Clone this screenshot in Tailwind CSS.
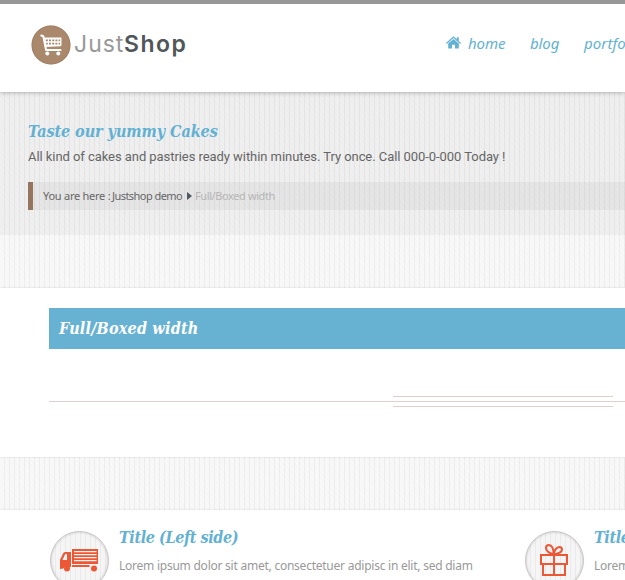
<!DOCTYPE html>
<html lang="en">
<head>
<meta charset="utf-8">
<title>JustShop</title>
<script src="https://cdn.jsdelivr.net/npm/@tailwindcss/browser@4"></script>
</head>
<body class="w-[625px] h-[580px] overflow-hidden bg-[#f7f7f7] bg-[repeating-linear-gradient(90deg,transparent_0_4px,#0000000b_4px_5px),repeating-linear-gradient(45deg,#ffffff50_0_1px,transparent_1px_4px)] font-['Noto_Sans',sans-serif] whitespace-nowrap">
<header class="relative h-[92px] border-t-4 border-[#979797] bg-white shadow-[0_1px_4px_#00000040] flex">
  <div class="flex pl-[31px] pt-[21px]">
    <svg class="w-10 h-10 shrink-0" viewBox="0 0 40 40">
      <circle cx="20" cy="20" r="19.5" fill="#a9886c"/>
      <circle cx="20" cy="20" r="19" fill="none" stroke="#96765c" stroke-opacity=".5"/>
      <path d="M10.300 10.500l2 .8 2.800 13.700h14.400" fill="none" stroke="#fff" stroke-width="2" stroke-linecap="round" stroke-linejoin="round"/>
      <path fill="#fff" d="M12.500 12.500h18v7.500q0 1-.8 1.200L14 22z"/>
      <path fill="#a9886c" d="M14.800 14.500h2v1.800h-2zm3.200 0h2v1.800h-2zm3.200 0h2v1.800h-2zm3.200 0h2v1.800h-2zm3.200 0h1.500v1.800h-1.500zM15.200 17.800h1.600v1.700h-1.600zm2.800 0h2v1.700h-2zm3.200 0h2v1.700h-2zm3.200 0h2v1.700h-2zm3.200 0h1.500v1.700h-1.500z"/>
      <circle cx="16.300" cy="28.500" r="2" fill="#fff"/><circle cx="27.300" cy="28.500" r="2" fill="#fff"/>
    </svg>
    <div class="ml-[3px] mt-[5px] leading-[29px] text-[23px] text-[#999] font-['Inter',sans-serif] flex"><span class="w-[50px] tracking-[1px]">Just</span><span class="font-semibold text-[#50575a] tracking-[1.5px]">Shop</span></div>
  </div>
  <nav class="ml-auto w-[179px] flex pt-[28px] text-[15px] leading-[22px] italic text-[#62b1d3]">
    <svg class="w-[15px] h-[13px] mt-[4px] mr-[7px] shrink-0" viewBox="0 0 15 13" fill="#62b1d3"><path d="M7.500 0.300L10.800 3.200V1.200h2v3.800L15 7l-.8 1L7.500 2 .8 8 0 7z"/><path d="M7.500 3l5.300 4.500v5H9V8.800H6v3.700H2.200v-5z"/></svg>
    <a class="w-[62px] shrink-0 tracking-[-0.1px]">home</a><a class="w-[54px] shrink-0 tracking-[-0.1px]">blog</a><a class="shrink-0 tracking-[0.1px]">portfolio</a>
  </nav>
</header>
<section class="h-[143px] bg-black/[0.035] pl-7 pt-[27px]">
  <h1 class="h-6 leading-[26px] text-[16px] font-bold italic font-['DejaVu_Serif_Condensed','DejaVu_Serif',serif] text-[#62b1d3] tracking-[-0.05px]">Taste our yummy Cakes</h1>
  <p class="h-7 pt-[4px] leading-[20px] text-[13px] text-[#666] font-['Roboto',sans-serif] tracking-[-0.06px]">All kind of cakes and pastries ready within minutes. Try once. Call 000-0-000 Today !</p>
  <div class="mt-[11px] h-7 border-l-[5px] border-[#95755e] bg-black/[0.04] pl-[10px] flex items-center text-[11px] text-[#666]">
    <span class="w-[69px] tracking-[-0.25px]">You are here :</span><span class="w-[75px] tracking-[-0.55px]">Justshop demo</span><span class="w-[5px] h-2 bg-[#4d5960] mr-[3px] [clip-path:polygon(0_0,100%_50%,0_100%)]"></span><span class="text-[#b5b5b5] tracking-[-0.4px]">Full/Boxed width</span>
  </div>
</section>
<main>
  <section class="mt-[53px] h-[169px] bg-white pt-5 pl-[49px] shadow-[0_0_2px_#00000026]">
    <h2 class="h-[41px] bg-[#67b2d3] pl-[10px] leading-[42px] text-[16px] font-bold italic font-['DejaVu_Serif_Condensed','DejaVu_Serif',serif] text-white tracking-[0.2px]">Full/Boxed width</h2>
    <div class="mt-[47px] h-[11px] flex flex-col justify-between">
      <div class="h-px w-[220px] ml-[344px] bg-[#dfcfcf]"></div>
      <div class="h-px bg-[#dfcfcf]"></div>
      <div class="h-px w-[220px] ml-[344px] bg-[#dfcfcf]"></div>
    </div>
  </section>
  <section class="mt-[53px] h-[70px] bg-white pt-[21px] pl-[50px] flex shadow-[0_0_2px_#00000026] overflow-hidden">
    <article class="w-[475px] shrink-0 flex">
      <div class="w-[59px] h-[59px] shrink-0 rounded-full border-[1.5px] border-[#c8c2c2] pl-[9px] pt-[17px] bg-[#f5f5f5] bg-[repeating-linear-gradient(90deg,transparent_0_4px,#0000000b_4px_5px)] shadow-[inset_0_0_3px_#0003]">
        <svg class="w-[38px] h-[23px] shrink-0" viewBox="0 0 38 23" fill="#ec5735"><path fill-rule="evenodd" d="M0 20v-9L3 4.500Q3.600 3 5 3h6v15H9.500a4 4 0 0 0-6 1.500zM2.500 11H7V5H5.200z"/><path fill-rule="evenodd" d="M12 0h26v15H12zM14 2v1.200h22.500V2zm0 3v1.200h22.500V5zm0 3v1.200h22.500V8zm0 3v1.200h22.500V11zM12 16h17.500v2H12z"/><circle cx="7" cy="19.500" r="3"/><circle cx="34" cy="19.500" r="3"/></svg>
      </div>
      <div class="ml-[10px] -mt-[6px]">
        <h3 class="h-6 leading-[26px] text-[16px] font-bold italic font-['DejaVu_Serif_Condensed','DejaVu_Serif',serif] text-[#62b1d3] tracking-[-0.4px]">Title (Left side)</h3>
        <p class="mt-[7px] leading-[20px] text-[12px] text-[#999] tracking-[-0.24px]">Lorem ipsum dolor sit amet, consectetuer adipisc in elit, sed diam</p>
      </div>
    </article>
    <article class="w-[475px] shrink-0 flex">
      <div class="w-[59px] h-[59px] shrink-0 rounded-full border-[1.5px] border-[#c8c2c2] pl-[14px] pt-[12px] bg-[#f5f5f5] bg-[repeating-linear-gradient(90deg,transparent_0_4px,#0000000b_4px_5px)] shadow-[inset_0_0_3px_#0003]">
        <svg class="w-[28px] h-[32px] shrink-0" viewBox="0 0 28 32" fill="none" stroke="#ec5735" stroke-width="2"><path d="M1 11h26v9H1zM3 20v11h22V20M14 11v20M13.500 10.500Q6 8 6 4q0-3 3-3 5 1 4.500 9.500zM13.500 10.500Q22 9 22 5.500 22 3 19.500 3 15 3.500 13.500 10.500z"/></svg>
      </div>
      <div class="ml-[10px] -mt-[6px]">
        <h3 class="h-6 leading-[26px] text-[16px] font-bold italic font-['DejaVu_Serif_Condensed','DejaVu_Serif',serif] text-[#62b1d3] tracking-[-0.4px]">Title (Left side)</h3>
        <p class="mt-[7px] leading-[20px] text-[12px] text-[#999] tracking-[-0.24px]">Lorem ipsum dolor sit amet, consectetuer adipisc in elit, sed diam</p>
      </div>
    </article>
  </section>
</main>
</body>
</html>
